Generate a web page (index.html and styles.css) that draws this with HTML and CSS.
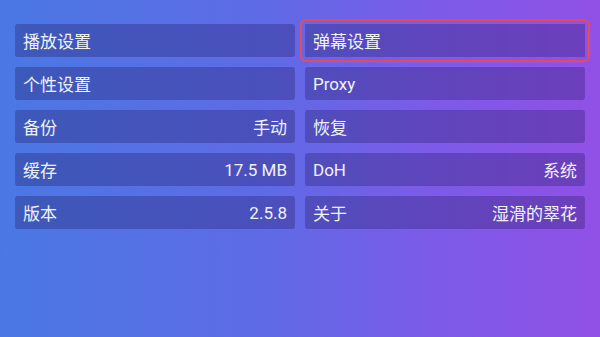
FILE: index.html
```html
<!DOCTYPE html>
<html lang="zh">
<head>
<meta charset="utf-8">
<link rel="stylesheet" href="styles.css">
</head>
<body>
<div class="grid">
  <div class="item"><span>播放设置</span></div>
  <div class="item focused"><span>弹幕设置</span></div>
  <div class="item"><span>个性设置</span></div>
  <div class="item"><span>Proxy</span></div>
  <div class="item"><span>备份</span><span>手动</span></div>
  <div class="item"><span>恢复</span></div>
  <div class="item"><span>缓存</span><span>17.5 MB</span></div>
  <div class="item"><span>DoH</span><span>系统</span></div>
  <div class="item"><span>版本</span><span>2.5.8</span></div>
  <div class="item"><span>关于</span><span>湿滑的翠花</span></div>
</div>
</body>
</html>
```
FILE: styles.css
```css
html, body {
  margin: 0;
  padding: 0;
  width: 600px;
  height: 337px;
  overflow: hidden;
}
body {
  background: linear-gradient(90deg, #4a78e3 0%, #5f6ae6 45%, #7a5ce8 70%, #9150e6 100%);
  font-family: Roboto, "Noto Sans CJK SC", sans-serif;
  color: #f0f2fb;
}
.grid {
  display: grid;
  grid-template-columns: 280px 280px;
  column-gap: 10px;
  row-gap: 10px;
  padding: 24px 15px 0 15px;
}
.item {
  height: 33px;
  box-sizing: border-box;
  display: flex;
  align-items: center;
  justify-content: space-between;
  padding: 0 8px;
  background: rgba(30, 20, 90, 0.3);
  border-radius: 3px;
  font-size: 17px;
}
.focused {
  border-radius: 1px;
  outline: 2px solid #e84a5a;
  outline-offset: 3px;
}
```
